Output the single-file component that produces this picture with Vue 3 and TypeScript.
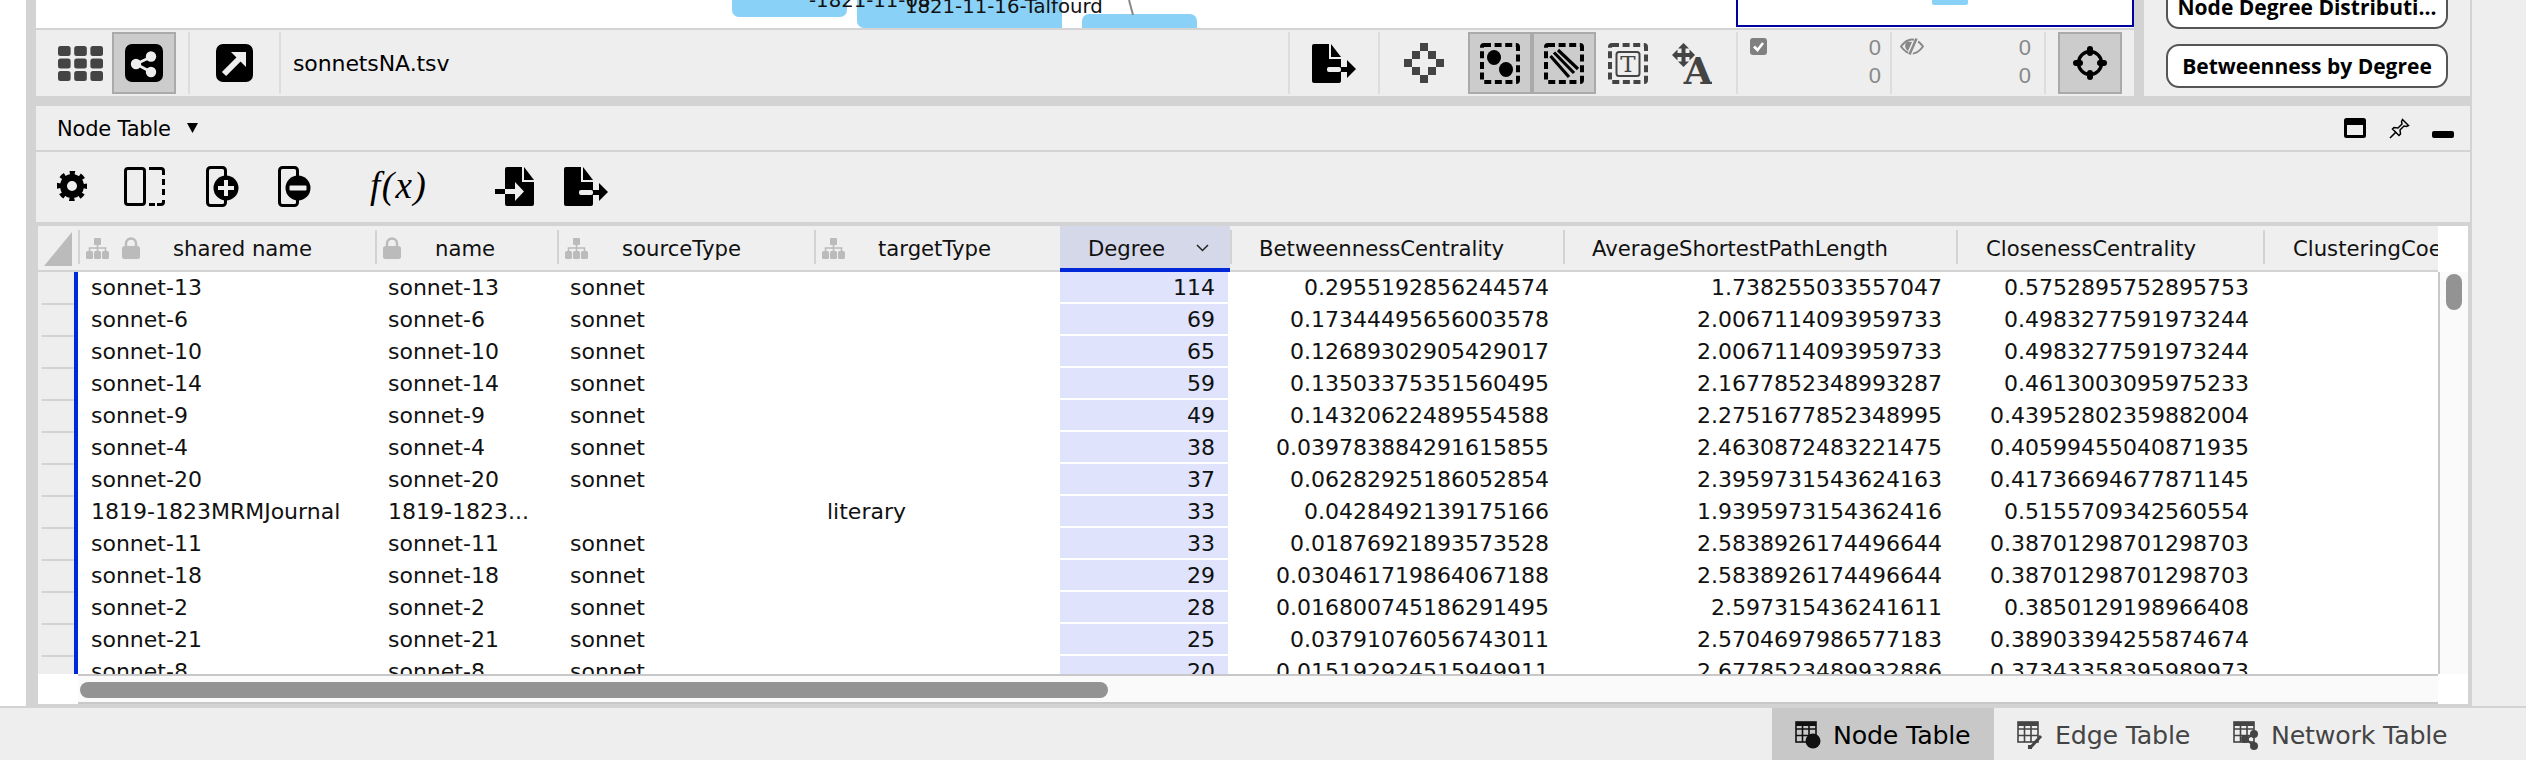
<script setup lang="ts">
interface Col { label: string; width: number; labelX: number; icons: string[]; align: string; sorted?: boolean }

const cols: Col[] = [
  { label: 'shared name', width: 297, labelX: 95, icons: ['tree', 'lock'], align: 'left' },
  { label: 'name', width: 182, labelX: 60, icons: ['lock'], align: 'left' },
  { label: 'sourceType', width: 257, labelX: 65, icons: ['tree'], align: 'left' },
  { label: 'targetType', width: 246, labelX: 64, icons: ['tree'], align: 'left' },
  { label: 'Degree', width: 170, labelX: 28, icons: [], align: 'right', sorted: true },
  { label: 'BetweennessCentrality', width: 333, labelX: 29, icons: [], align: 'right' },
  { label: 'AverageShortestPathLength', width: 393, labelX: 29, icons: [], align: 'right' },
  { label: 'ClosenessCentrality', width: 307, labelX: 30, icons: [], align: 'right' },
  { label: 'ClusteringCoefficient', width: 175, labelX: 30, icons: [], align: 'right' },
]

const gridColumns = cols.map((c) => c.width + 'px').join(' ')

const rows: string[][] = [
  ['sonnet-13', 'sonnet-13', 'sonnet', '', '114', '0.2955192856244574', '1.738255033557047', '0.5752895752895753'],
  ['sonnet-6', 'sonnet-6', 'sonnet', '', '69', '0.17344495656003578', '2.0067114093959733', '0.4983277591973244'],
  ['sonnet-10', 'sonnet-10', 'sonnet', '', '65', '0.12689302905429017', '2.0067114093959733', '0.4983277591973244'],
  ['sonnet-14', 'sonnet-14', 'sonnet', '', '59', '0.13503375351560495', '2.1677852348993287', '0.4613003095975233'],
  ['sonnet-9', 'sonnet-9', 'sonnet', '', '49', '0.14320622489554588', '2.2751677852348995', '0.43952802359882004'],
  ['sonnet-4', 'sonnet-4', 'sonnet', '', '38', '0.039783884291615855', '2.4630872483221475', '0.40599455040871935'],
  ['sonnet-20', 'sonnet-20', 'sonnet', '', '37', '0.06282925186052854', '2.3959731543624163', '0.41736694677871145'],
  ['1819-1823MRMJournal', '1819-1823...', '', 'literary', '33', '0.0428492139175166', '1.9395973154362416', '0.5155709342560554'],
  ['sonnet-11', 'sonnet-11', 'sonnet', '', '33', '0.01876921893573528', '2.5838926174496644', '0.38701298701298703'],
  ['sonnet-18', 'sonnet-18', 'sonnet', '', '29', '0.030461719864067188', '2.5838926174496644', '0.38701298701298703'],
  ['sonnet-2', 'sonnet-2', 'sonnet', '', '28', '0.016800745186291495', '2.597315436241611', '0.3850129198966408'],
  ['sonnet-21', 'sonnet-21', 'sonnet', '', '25', '0.03791076056743011', '2.5704697986577183', '0.38903394255874674'],
  ['sonnet-8', 'sonnet-8', 'sonnet', '', '20', '0.015192924515949911', '2.6778523489932886', '0.37343358395989973'],
]

const gridDots: number[][] = []
for (let r = 0; r < 3; r++) for (let c = 0; c < 3; c++) gridDots.push([c * 16.2, r * 12.5])

const diamond: number[][] = [[16, 0], [8, 8], [24, 8], [0, 16], [32, 16], [8, 24], [24, 24], [16, 32]]
</script>

<template>
  <div class="page">
    <div class="work">
      <div class="gutter"></div>
      <div class="main">
        <div class="upper">
          <div class="net">
            <div class="canvas">
              <div class="node n1"></div>
              <div class="node n2"></div>
              <div class="node n3"></div>
              <div class="node n4"></div>
              <svg class="edge" width="12" height="16" viewBox="0 0 12 16"><line x1="2" y1="0" x2="6" y2="15" stroke="#888" stroke-width="2" /></svg>
              <span class="nlabel l1">-1821-11-08</span>
              <span class="nlabel l2">1821-11-16-Talfourd</span>
              <div class="birdseye"><div class="minimap-node"></div></div>
            </div>
            <div class="tb">
              <svg class="i-grid" width="45" height="35" viewBox="0 0 45 35">
                <rect v-for="(d, i) in gridDots" :key="i" :x="d[0]" :y="d[1]" width="12.6" height="10" rx="2.5" fill="#444" />
              </svg>
              <div class="tbtn m9">
                <svg width="38" height="38" viewBox="0 0 38 38">
                  <rect width="38" height="38" rx="7" fill="#000" />
                  <g stroke="#eee" stroke-width="2.6"><line x1="11" y1="20" x2="26" y2="13" /><line x1="11" y1="20" x2="26" y2="28" /></g>
                  <circle cx="11" cy="20" r="5.2" fill="#eee" /><circle cx="26" cy="12.5" r="5.2" fill="#eee" /><circle cx="26" cy="28" r="5.2" fill="#eee" />
                </svg>
              </div>
              <div class="vdiv m12"></div>
              <svg class="m26" width="37" height="38" viewBox="0 0 37 38">
                <rect width="37" height="38" rx="7" fill="#000" />
                <line x1="8" y1="30" x2="23" y2="15" stroke="#eee" stroke-width="6" />
                <polygon points="15,8 30,8 30,23" fill="#eee" />
              </svg>
              <div class="vdiv m26"></div>
              <span class="file">sonnetsNA.tsv</span>
              <div class="tb-right">
                <div class="vdiv"></div>
                <svg class="m22" width="44" height="39" viewBox="0 0 44 39">
                  <path d="M0 2a2 2 0 0 1 2-2H17V15H29V37a2 2 0 0 1-2 2H2a2 2 0 0 1-2-2z" fill="#000" />
                  <path d="M19 0L29 13H19z" fill="#000" />
                  <rect x="15" y="23" width="14" height="5" rx="2" fill="#eee" />
                  <rect x="29" y="23" width="7" height="5" fill="#000" />
                  <path d="M35 16L44 25L35 34z" fill="#000" />
                </svg>
                <div class="vdiv m22"></div>
                <svg class="m24" width="40" height="40" viewBox="0 0 40 40">
                  <rect v-for="(d, i) in diamond" :key="i" :x="d[0]" :y="d[1]" width="8" height="8" fill="#444" />
                </svg>
                <div class="tbtn m24 wide">
                  <svg width="40" height="41" viewBox="0 0 40 41">
                    <rect x="2" y="2" width="36" height="37" rx="2" fill="none" stroke="#000" stroke-width="4" stroke-dasharray="7 3.6" />
                    <ellipse cx="14" cy="14.5" rx="7" ry="7.5" fill="#000" /><ellipse cx="26" cy="26.5" rx="7" ry="7.5" fill="#000" />
                  </svg>
                </div>
                <div class="tbtn wide">
                  <svg width="40" height="41" viewBox="0 0 40 41">
                    <rect x="2" y="2" width="36" height="37" rx="2" fill="none" stroke="#000" stroke-width="4" stroke-dasharray="7 3.6" />
                    <g stroke="#000" stroke-width="3.2"><line x1="6.5" y1="13" x2="25" y2="34" /><line x1="10" y1="9.5" x2="30" y2="30" /><line x1="14" y1="7" x2="34" y2="26" /></g>
                  </svg>
                </div>
                <svg class="m12" width="40" height="41" viewBox="0 0 40 41">
                  <rect x="2" y="2" width="36" height="37" rx="2" fill="none" stroke="#444" stroke-width="4" stroke-dasharray="7 3.6" />
                  <rect x="8.5" y="9" width="23" height="24" rx="2.5" fill="none" stroke="#444" stroke-width="2" />
                  <text x="20" y="29" text-anchor="middle" class="svg-t">T</text>
                </svg>
                <svg class="m24" width="40" height="41" viewBox="0 0 40 41">
                  <g fill="#444">
                    <rect x="9.500" y="4" width="4" height="16" /><rect x="3" y="10" width="17" height="4" />
                    <path d="M11.500 0L17 5.500H6z" /><path d="M11.500 24L17 18.500H6z" /><path d="M0 12L5.500 6.500V17.500z" /><path d="M23 12L17.500 6.500V17.500z" />
                  </g>
                  <text x="26" y="41" text-anchor="middle" class="svg-a">A</text>
                </svg>
                <div class="vdiv m24"></div>
                <div class="count c1">
                  <svg class="count-icon" width="17" height="17" viewBox="0 0 17 17">
                    <rect width="17" height="17" rx="3" fill="#808080" />
                    <polyline points="4,8.5 7.5,12 13,5" fill="none" stroke="#fff" stroke-width="2.6" />
                  </svg>
                  <div class="nums"><span>0</span><span>0</span></div>
                </div>
                <div class="vdiv"></div>
                <div class="count c2">
                  <svg class="count-icon" width="24" height="17" viewBox="0 0 24 17">
                    <path d="M1 8.500C5 3 9 1.500 12 1.500S19 3 23 8.500C19 14 15 15.500 12 15.500S5 14 1 8.500z" fill="none" stroke="#888" stroke-width="2" />
                    <path d="M7 3.500A6 6 0 0 0 8 13L12 4z" fill="#888" />
                    <line x1="17" y1="0.500" x2="10" y2="16.500" stroke="#eee" stroke-width="4.500" />
                    <line x1="16.500" y1="0.500" x2="9.500" y2="16.500" stroke="#888" stroke-width="2.400" />
                  </svg>
                  <div class="nums"><span>0</span><span>0</span></div>
                </div>
                <div class="vdiv"></div>
                <div class="tbtn m12 wide">
                  <svg width="34" height="34" viewBox="0 0 34 34">
                    <circle cx="17" cy="17" r="11.500" fill="none" stroke="#000" stroke-width="3.400" />
                    <g stroke="#000" stroke-width="6" stroke-linecap="round">
                      <line x1="17" y1="3" x2="17" y2="7" /><line x1="17" y1="27" x2="17" y2="31" /><line x1="3" y1="17" x2="7" y2="17" /><line x1="27" y1="17" x2="31" y2="17" />
                    </g>
                  </svg>
                </div>
              </div>
            </div>
          </div>
          <div class="side">
            <div class="pill">Node Degree Distributi...</div>
            <div class="pill">Betweenness by Degree</div>
          </div>
        </div>

        <div class="lower">
          <div class="lhead">
            <span class="ltitle">Node Table</span>
            <svg class="caret" width="11" height="10" viewBox="0 0 11 10"><polygon points="0,0 11,0 5.500,10" fill="#000" /></svg>
            <div class="lhead-right">
              <svg width="22" height="20" viewBox="0 0 22 20">
                <rect x="1.500" y="1.500" width="19" height="17" rx="1" fill="none" stroke="#000" stroke-width="3" />
                <rect x="1" y="1" width="20" height="6" fill="#000" />
              </svg>
              <svg class="pin" width="21" height="21" viewBox="0 0 21 21">
                <path d="M13.500 1.500L19.500 7.500L17.500 8.500L15 8L11 12L11.500 16L10 17.500L3.500 11L5 9.500L9 10L13 6L12.500 3.500Z" fill="none" stroke="#000" stroke-width="1.500" />
                <line x1="1" y1="20" x2="7" y2="14" stroke="#000" stroke-width="1.600" />
              </svg>
              <div class="minus"></div>
            </div>
          </div>
          <div class="ltools">
            <svg class="gear" width="30" height="30" viewBox="0 0 30 30">
              <circle cx="15" cy="15" r="8.500" fill="none" stroke="#000" stroke-width="7" />
              <circle cx="15" cy="15" r="13" fill="none" stroke="#000" stroke-width="4.500" stroke-dasharray="5.100 5.100" stroke-dashoffset="2.550" />
            </svg>
            <svg class="colpanel" width="41" height="39" viewBox="0 0 41 39">
              <rect x="1.500" y="1.500" width="19" height="36" rx="2.500" fill="none" stroke="#000" stroke-width="3" />
              <path d="M25 1.500H37a2.500 2.500 0 0 1 2.500 2.500V8" fill="none" stroke="#000" stroke-width="3" />
              <line x1="39.500" y1="12" x2="39.500" y2="30" fill="none" stroke="#000" stroke-width="3" stroke-dasharray="6 4" />
              <path d="M39.500 33V35a2.500 2.500 0 0 1-2.500 2.500H33" fill="none" stroke="#000" stroke-width="3" />
              <line x1="25" y1="37.500" x2="31" y2="37.500" stroke="#000" stroke-width="3" />
            </svg>
            <svg class="addcol" width="33" height="41" viewBox="0 0 33 41">
              <rect x="1.500" y="1.500" width="18" height="38" rx="3" fill="none" stroke="#000" stroke-width="3" />
              <circle cx="20" cy="22" r="12.500" fill="#000" />
              <rect x="18" y="14" width="4" height="16" fill="#eee" /><rect x="12" y="20" width="16" height="4" fill="#eee" />
            </svg>
            <svg class="delcol" width="33" height="41" viewBox="0 0 33 41">
              <rect x="1.500" y="1.500" width="18" height="38" rx="3" fill="none" stroke="#000" stroke-width="3" />
              <circle cx="20" cy="22" r="12.500" fill="#000" />
              <rect x="11.500" y="19.500" width="17" height="5" rx="1" fill="#eee" />
            </svg>
            <span class="fx">f(x)</span>
            <svg class="imp" width="39" height="39" viewBox="0 0 39 39">
              <path d="M10 2a2 2 0 0 1 2-2H27V15H39V37a2 2 0 0 1-2 2H12a2 2 0 0 1-2-2z" fill="#000" />
              <path d="M29 0L39 13H29z" fill="#000" />
              <rect x="0" y="22" width="10" height="5" fill="#000" />
              <rect x="10" y="22" width="11" height="5" fill="#eee" />
              <path d="M20 15L29 24.500L20 34z" fill="#eee" />
            </svg>
            <svg class="exp" width="44" height="39" viewBox="0 0 44 39">
              <path d="M0 2a2 2 0 0 1 2-2H17V15H29V37a2 2 0 0 1-2 2H2a2 2 0 0 1-2-2z" fill="#000" />
              <path d="M19 0L29 13H19z" fill="#000" />
              <rect x="15" y="23" width="14" height="5" rx="2" fill="#eee" />
              <rect x="29" y="23" width="7" height="5" fill="#000" />
              <path d="M35 16L44 25L35 34z" fill="#000" />
            </svg>
          </div>

          <div class="table">
            <div class="t-head">
              <div class="corner"><div class="tri"></div></div>
              <div class="t-hgrid" :style="{ gridTemplateColumns: gridColumns }">
                <div v-for="c in cols" :key="c.label" class="hcell" :class="{ sorted: c.sorted }">
                  <div class="hicons" :style="{ width: c.labelX - 8 + 'px' }">
                    <template v-for="ic in c.icons" :key="ic">
                      <svg v-if="ic === 'tree'" class="ic-tree" width="23" height="21" viewBox="0 0 23 21">
                        <rect x="8" y="0" width="7" height="7" rx="1" fill="#bbb" />
                        <path d="M11.500 7V10M3.500 13V10H19.500V13M11.500 10V13" fill="none" stroke="#bbb" stroke-width="1.600" />
                        <rect x="0" y="13" width="7" height="8" rx="1.500" fill="#bbb" /><rect x="8" y="13" width="7" height="8" rx="1.500" fill="#bbb" /><rect x="16" y="13" width="7" height="8" rx="1.500" fill="#bbb" />
                      </svg>
                      <svg v-else class="ic-lock" width="18" height="22" viewBox="0 0 18 22">
                        <path d="M4 10V6.500a5 5 0 0 1 10 0V10" fill="none" stroke="#bbb" stroke-width="2.400" />
                        <rect x="0" y="9" width="18" height="13" rx="2.500" fill="#bbb" />
                      </svg>
                    </template>
                  </div>
                  <span class="hlabel">{{ c.label }}</span>
                  <svg v-if="c.sorted" class="chev" width="13" height="8" viewBox="0 0 13 8"><polyline points="1,1 6.500,6.500 12,1" fill="none" stroke="#222" stroke-width="1.500" /></svg>
                </div>
              </div>
              <div class="hblank"></div>
            </div>
            <div class="t-body">
              <div class="rowheads">
                <div v-for="(r, i) in rows" :key="i" class="rowhead"></div>
              </div>
              <div class="cells">
                <div v-for="(r, i) in rows" :key="i" class="row" :style="{ gridTemplateColumns: gridColumns }">
                  <div v-for="(v, j) in r" :key="j" class="cell" :class="{ num: cols[j].align === 'right', deg: j === 4 }">{{ v }}</div>
                  <div class="cell"></div>
                </div>
              </div>
              <div class="vscroll"><div class="vthumb"></div></div>
            </div>
            <div class="t-foot">
              <div class="foot-l"></div>
              <div class="hscroll"><div class="hthumb"></div></div>
              <div class="foot-r"></div>
            </div>
          </div>
        </div>
      </div>
      <div class="rest"></div>
    </div>
    <div class="status">
      <div class="tab active">
        <svg width="26" height="29" viewBox="0 0 26 29">
          <g fill="none" stroke="#111" stroke-width="1.600"><rect x="1" y="1" width="20" height="20" /><path d="M1 8H21M1 14.500H21M7.500 1V21M14 1V21" /></g>
          <rect x="1" y="1" width="20" height="4" fill="#111" />
          <circle cx="18" cy="20" r="7.500" fill="#111" />
        </svg>
        <span>Node Table</span>
      </div>
      <div class="tab">
        <svg width="26" height="29" viewBox="0 0 26 29">
          <g fill="none" stroke="#444" stroke-width="1.600"><rect x="1" y="1" width="20" height="20" /><path d="M1 8H21M1 14.500H21M7.500 1V21M14 1V21" /></g>
          <rect x="1" y="1" width="20" height="4" fill="#444" />
          <line x1="13" y1="27" x2="24" y2="15" stroke="#444" stroke-width="3" />
          <rect x="11" y="24" width="4" height="4" fill="#444" />
        </svg>
        <span>Edge Table</span>
      </div>
      <div class="tab last">
        <svg width="26" height="29" viewBox="0 0 26 29">
          <g fill="none" stroke="#444" stroke-width="1.600"><rect x="1" y="1" width="20" height="20" /><path d="M1 8H21M1 14.500H21M7.500 1V21M14 1V21" /></g>
          <rect x="1" y="1" width="20" height="4" fill="#444" />
          <g stroke="#444" stroke-width="2"><line x1="13" y1="18" x2="21" y2="13" /><line x1="13" y1="18" x2="21" y2="25" /></g>
          <circle cx="12" cy="18" r="4" fill="#444" /><circle cx="21" cy="13" r="4" fill="#444" /><circle cx="21" cy="25" r="4" fill="#444" />
        </svg>
        <span>Network Table</span>
      </div>
    </div>
  </div>
</template>

<style scoped>
.page {
  width: 2526px;
  height: 760px;
  background: #eee;
  overflow: hidden;
  font-family: "DejaVu Sans", sans-serif;
  color: #000;
  display: flex;
  flex-direction: column;
}
.work {
  height: 706px;
  display: flex;
  flex: none;
  border-bottom: 2px solid #d3d3d3;
  box-sizing: content-box;
}
.gutter { width: 26px; background: #fff; flex: none; }
.main {
  width: 2446px;
  flex: none;
  background: #d3d3d3;
  padding-left: 10px;
  padding-right: 2px;
  box-sizing: border-box;
  display: flex;
  flex-direction: column;
}
.rest { flex: 1; background: #eee; }

.upper { height: 96px; display: flex; flex: none; }
.net { width: 2098px; flex: none; display: flex; flex-direction: column; }
.canvas { height: 28px; background: #fff; position: relative; overflow: hidden; flex: none; }
.node { position: absolute; background: #89d1f6; border-radius: 7px; }
.n1 { left: 696px; top: -30px; width: 115px; height: 47px; }
.n2 { left: 821px; top: -10px; width: 100px; height: 38px; }
.n3 { left: 910px; top: -10px; width: 116px; height: 50px; border-radius: 0; }
.n4 { left: 1046px; top: 14px; width: 115px; height: 50px; }
.edge { position: absolute; left: 1091px; top: 0; }
.nlabel { position: absolute; font-size: 19.700px; line-height: 20px; white-space: nowrap; color: #111; }
.l1 { left: 773px; top: -9px; }
.l2 { left: 869px; top: -3px; }
.birdseye { position: absolute; left: 1700px; top: -6px; width: 398px; height: 33px; border: 2px solid #00009e; box-sizing: border-box; background: #fff; }
.minimap-node { position: absolute; left: 194px; top: 0; width: 36px; height: 9px; background: #89d1f6; border-radius: 2px; }

.tb {
  height: 68px;
  flex: none;
  box-sizing: border-box;
  border-top: 2px solid #d3d3d3;
  background: #eee;
  display: flex;
  align-items: center;
  position: relative;
}
.i-grid { margin-left: 22px; }
.tbtn {
  width: 64px;
  height: 62px;
  box-sizing: border-box;
  background: #ccc;
  border: 2px solid #aaa;
  display: flex;
  align-items: center;
  justify-content: center;
  flex: none;
}
.vdiv { width: 2px; height: 62px; background: #ddd; flex: none; }
.m9 { margin-left: 9px; }
.m12 { margin-left: 12px; }
.m22 { margin-left: 22px; }
.m24 { margin-left: 24px; }
.m26 { margin-left: 26px; }
.file { margin-left: 12px; font-size: 22px; letter-spacing: -0.1px; }
.tb-right { margin-left: auto; width: 846px; display: flex; align-items: center; flex: none; }
.svg-t { font-family: "DejaVu Serif", serif; font-size: 23px; fill: #444; }
.svg-a { font-family: "DejaVu Serif", serif; font-weight: 700; font-size: 37px; fill: #444; }
.count { height: 62px; display: flex; box-sizing: border-box; flex: none; }
.c1 { width: 140px; margin-left: 12px; padding-right: 9px; }
.c2 { width: 152px; padding-left: 8px; padding-right: 13px; }
.count-icon { margin-top: 6px; }
.nums {
  margin-left: auto;
  margin-top: 2px;
  display: flex;
  flex-direction: column;
  font-family: "Liberation Sans", sans-serif;
  font-size: 22px;
  line-height: 28px;
  color: #888;
  text-align: right;
}

.side {
  flex: 1;
  margin-left: 10px;
  background: #eee;
  overflow: hidden;
  display: flex;
  flex-direction: column;
  justify-content: flex-end;
  align-items: flex-start;
  padding: 0 0 8px 22px;
  gap: 15px;
}
.pill {
  width: 282px;
  height: 44px;
  flex: none;
  box-sizing: border-box;
  border: 2px solid #555;
  border-radius: 13px;
  background: #fff;
  font-family: "Open Sans", sans-serif;
  font-weight: 700;
  font-size: 21px;
  line-height: 40px;
  text-align: center;
  white-space: nowrap;
}

.lower { margin-top: 10px; flex: 1; display: flex; flex-direction: column; min-height: 0; }
.lhead {
  height: 46px;
  flex: none;
  box-sizing: border-box;
  border-bottom: 2px solid #d3d3d3;
  background: #eee;
  display: flex;
  align-items: center;
  padding-left: 21px;
}
.ltitle { font-size: 21px; letter-spacing: -0.2px; margin-top: 2px; }
.caret { margin-left: 16px; }
.lhead-right { margin-left: auto; display: flex; align-items: center; padding-right: 16px; }
.pin { margin-left: 23px; }
.minus { width: 22px; height: 7px; background: #000; border-radius: 2px; margin-left: 22px; margin-top: 13px; }
.ltools { height: 70px; flex: none; background: #eee; display: flex; align-items: center; padding-bottom: 2px; box-sizing: border-box; }
.gear { margin-left: 21px; }
.colpanel { margin-left: 37px; }
.addcol { margin-left: 41px; }
.delcol { margin-left: 39px; }
.fx { margin-left: 59px; width: 63px; font-family: "Liberation Serif", serif; font-style: italic; font-size: 37px; letter-spacing: 1.5px; line-height: 40px; white-space: nowrap; }
.imp { margin-left: 62px; }
.exp { margin-left: 30px; }

.table { margin: 4px 0 2px 2px; width: 2430px; flex: 1; display: flex; flex-direction: column; background: #fff; min-height: 0; }
.t-head { height: 46px; flex: none; display: flex; background: #efefef; box-sizing: border-box; }
.corner { width: 40px; flex: none; position: relative; border-bottom: 2px solid #d3d3d3; box-sizing: border-box; }
.tri { position: absolute; left: 6px; top: 6px; width: 28px; height: 34px; background: #bbb; clip-path: polygon(100% 0, 100% 100%, 0 100%); }
.t-hgrid { display: grid; width: 2360px; flex: none; }
.hcell {
  height: 46px;
  box-sizing: border-box;
  border-bottom: 2px solid #d3d3d3;
  display: flex;
  align-items: center;
  padding-left: 8px;
  font-size: 21.200px;
  white-space: nowrap;
  overflow: hidden;
  position: relative;
  color: #111;
}
.hcell::before { content: ""; position: absolute; left: 0; top: 4px; bottom: 6px; width: 2px; background: #d3d3d3; }
.hcell.sorted { background: #d5d8e8; border-bottom: 4px solid #0028d8; }
.hcell.sorted::before { display: none; }
.hcell.sorted .hlabel { margin-top: 2px; }
.hicons { flex: none; display: flex; align-items: center; height: 22px; }
.ic-tree { margin-right: 13px; }
.chev { position: absolute; left: 136px; top: 18px; }
.hblank { flex: 1; background: #fff; }

.t-body { height: 402px; flex: none; display: flex; overflow: hidden; }
.rowheads { width: 40px; flex: none; box-sizing: border-box; background: #eee; border-right: 4px solid #0028d8; }
.rowhead { height: 32px; box-sizing: border-box; position: relative; }
.rowhead::after { content: ""; position: absolute; left: 4px; right: 0; top: 31px; height: 2px; background: #d3d3d3; }
.cells { width: 2360px; flex: none; }
.row { display: grid; height: 32px; font-size: 22px; }
.cell { height: 30px; line-height: 31px; padding-left: 13px; white-space: nowrap; overflow: hidden; color: #111; }
.cell.num { text-align: right; padding: 0 14px 0 0; }
.cell.deg { background: #dfe3fb; margin-right: 2px; padding-right: 13px; }
.vscroll { flex: 1; background: #fafafa; border-left: 2px solid #c8c8c8; position: relative; }
.vthumb { width: 16px; height: 36px; margin: 2px 0 0 6px; border-radius: 8px; background: #939393; }

.t-foot { height: 30px; flex: none; display: flex; background: #fff; }
.foot-l { width: 40px; flex: none; background: #fff; }
.hscroll { width: 2360px; flex: none; box-sizing: border-box; background: #fafafa; border-top: 2px solid #c8c8c8; border-bottom: 2px solid #c8c8c8; padding: 6px 0 0 2px; }
.hthumb { width: 1028px; height: 16px; border-radius: 8px; background: #939393; }
.foot-r { flex: 1; background: #fff; }

.status { flex: 1; display: flex; justify-content: flex-end; }
.tab { display: flex; align-items: center; width: 216px; flex: none; box-sizing: border-box; padding: 3px 0 0 23px; gap: 12px; font-size: 25.300px; color: #444; height: 52px; letter-spacing: -0.2px; white-space: nowrap; }
.tab.active { background: #c8c8c8; color: #000; width: 222px; }
.tab.last { width: 316px; }
</style>

<style>
html, body { margin: 0; padding: 0; overflow: hidden; }
</style>
